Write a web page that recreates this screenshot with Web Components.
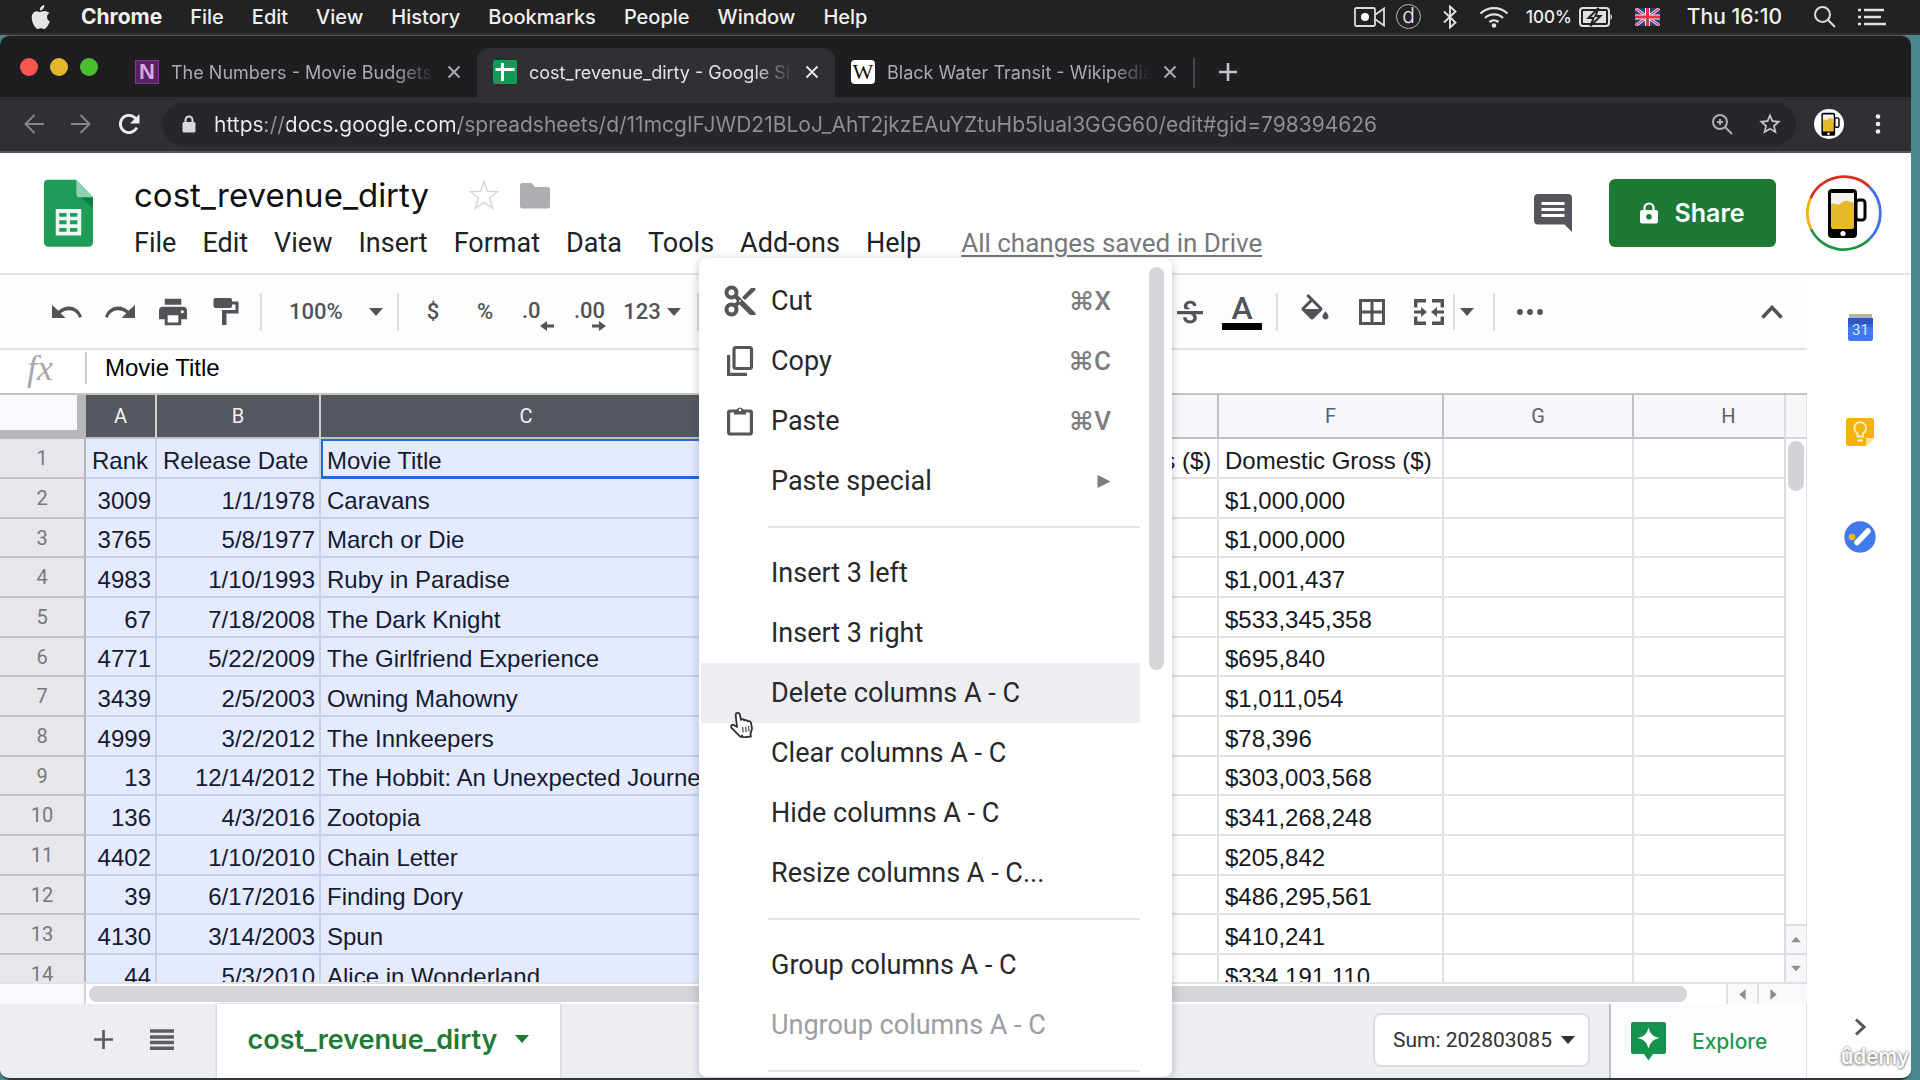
<!DOCTYPE html>
<html lang="en">
<head>
<meta charset="utf-8">
<title>cost_revenue_dirty - Google Sheets</title>
<style>
html,body{margin:0;height:100%}
body{background:#4a868d;font-family:Roboto,"Liberation Sans",sans-serif;overflow:hidden}
</style>
</head>
<body>
<desktop-shell></desktop-shell>
<script>
const ICONS = {
  apple:['0 0 20 28','<path fill="#e4e4e4" d="M13.6 1c.2 1.700-.5 3.300-1.500 4.500-1 1.200-2.300 1.700-3.300 1.500-.2-1.600.5-3.200 1.500-4.300C11.200 1.600 12.500 1 13.600 1zM19 9.700c-1.700 1-2.500 2.500-2.500 4.400 0 2.200 1.200 4 3 4.800-.6 2-1.700 4-3 5.600-.9 1.200-1.800 2.300-3.200 2.300-1.300 0-1.700-.8-3.300-.8s-2.100.8-3.400.8-2.300-1.100-3.200-2.400C1.200 21.600 0 17.700 0 14.600 0 10.200 2.700 7.700 5.400 7.700c1.400 0 2.800 1 3.700 1 .9 0 2.500-1.100 4.300-1.100 2.100 0 4.200.9 5.600 2.100z"/>'],
  camera:['0 0 31 20','<g fill="none" stroke="#ddd" stroke-width="1.800"><rect x="1" y="1" width="20" height="18" rx="1.500"/><path d="M21.500 7.500 30 1.500v17l-8.500-6"/></g><circle cx="11" cy="10" r="4" fill="#fff"/>'],
  bluetooth:['0 0 14 24','<path fill="none" stroke="#e0e0e0" stroke-width="1.900" d="m1 6.500 11.500 11L7 22.500v-21l5.500 5L1 17.500"/>'],
  wifi:['0 0 30 22','<g fill="none" stroke="#e0e0e0" stroke-width="2.300"><path d="M1.500 7.500a19.500 19.500 0 0 1 27 0M6 12a13 13 0 0 1 18 0M10.500 16a7 7 0 0 1 9 0"/></g><circle cx="15" cy="19.500" r="2.300" fill="#e0e0e0"/>'],
  battery:['0 0 34 20','<rect x="1" y="1" width="29" height="18" rx="3" fill="none" stroke="#e0e0e0" stroke-width="2"/><path fill="#e0e0e0" d="M31.500 7c2 1 2 5 0 6z"/><rect x="4" y="4" width="23" height="12" fill="#e0e0e0"/><path fill="#e0e0e0" stroke="#222" stroke-width="2" d="M19.500 1 9.500 11h5l-3 8 10-10h-5z"/>'],
  flag:['0 0 25 18','<path fill="#303c80" d="M0 0h25v18H0z"/><path stroke="#eee" stroke-width="3" d="m0 0 25 18M25 0 0 18"/><path stroke="#d8344a" stroke-width="1.200" d="m0 0 25 18M25 0 0 18"/><path stroke="#eee" stroke-width="5" d="M12.500 0v18M0 9h25"/><path stroke="#d8344a" stroke-width="3" d="M12.500 0v18M0 9h25"/>'],
  spot:['0 0 22 22','<g fill="none" stroke="#ddd" stroke-width="2"><circle cx="8.500" cy="8.500" r="7.500"/><path d="m14 14 7 7"/></g>'],
  list:['0 0 28 18','<g stroke="#e0e0e0" stroke-width="2.400"><path d="M6 2h20M6 9h17M6 16h22"/><path d="M0 2h3M0 9h3M0 16h3"/></g>'],
  close:['0 0 14 14','<path stroke="currentColor" stroke-width="2" d="m1.500 1.500 11 11m0-11-11 11"/>'],
  add:['0 0 18 18','<path stroke="currentColor" stroke-width="2.600" d="M9 0v18M0 9h18"/>'],
  sheetfav:['0 0 24 24','<rect width="24" height="24" rx="2" fill="#149a55"/><path stroke="#fff" stroke-width="3" d="M9.500 3v18M2.500 9.500h19"/>'],
  back:['0 0 20 20','<path fill="none" stroke="currentColor" stroke-width="2" d="M20 10H2M10.500 1 1.500 10l9 9"/>'],
  fwd:['0 0 20 20','<path fill="none" stroke="currentColor" stroke-width="2" d="M0 10h18M9.500 1l9 9-9 9"/>'],
  reload:['0 0 22 22','<path fill="none" stroke="#eee" stroke-width="2.800" d="M18.800 14.500A8.600 8.600 0 1 1 16.500 4.400L19 7"/><path fill="#eee" d="M21.500 1v9.500H12z"/>'],
  lock:['0 0 14 18','<path fill="none" stroke="currentColor" stroke-width="2" d="M3.500 8V5a3.500 3.500 0 0 1 7 0v3"/><rect x="0.500" y="7" width="13" height="10.500" rx="1.500" fill="currentColor"/>'],
  zoom:['0 0 22 22','<g fill="none" stroke="#aaadb2" stroke-width="2"><circle cx="9" cy="9" r="7"/><path d="m14 14 7 7M9 6v6M6 9h6"/></g>'],
  star:['0 0 24 24','<path fill="currentColor" d="m22 9.240-7.190-.62L12 2 9.190 8.630 2 9.240l5.460 4.730L5.820 21 12 17.270 18.180 21l-1.630-7.030zM12 15.400l-3.760 2.270 1-4.280-3.320-2.880 4.380-.38L12 6.100l1.710 4.040 4.380.38-3.320 2.880 1 4.280z"/>'],
  kebab:['0 0 6 20','<circle cx="3" cy="2.500" r="2.300" fill="#eee"/><circle cx="3" cy="10" r="2.300" fill="#eee"/><circle cx="3" cy="17.500" r="2.300" fill="#eee"/>'],
  beer:['0 0 76 76','<rect x="50" y="25" width="9" height="20" rx="3" fill="#fff" stroke="#000" stroke-width="3"/><rect x="22" y="14" width="29" height="49" rx="4" fill="#000"/><path fill="#f4f0ec" d="M25 18h23v18H25z"/><path fill="#e6b92c" d="M25 29c4-2 5 2 9 0 4-4 8-4 10-2 2 0 3 0 4 1v24q0 2-2 2H27q-2 0-2-2z"/><circle cx="37" cy="58.500" r="2.600" fill="#fff"/>'],
  ring:['0 0 76 76','<g fill="none" stroke-width="2.800"><path stroke="#d93025" d="M4.500 23.500A36.500 36.500 0 0 1 63.500 12"/><path stroke="#4170ee" d="M63.500 12a36.500 36.500 0 0 1 0 52"/><path stroke="#23934a" d="M63.500 64A36.500 36.500 0 0 1 5 54"/><path stroke="#f6ae1a" d="M5 54a36.500 36.500 0 0 1-.5-30.500"/></g>'],
  sheetlogo:['0 0 50 69','<path fill="#1f9d58" d="M4 0h29l17 18v46a4.500 4.500 0 0 1-4.500 4.500h-41A4.500 4.500 0 0 1 0 64V4a4 4 0 0 1 4-4z"/><path fill="#0f8045" d="m36 17 14 12V18z"/><path fill="#8ed1b1" d="M33 0v14a4 4 0 0 0 4 4h13z"/><path fill="#f1f8f4" d="M12 30h26v27H12z"/><path fill="#1f9d58" d="M15.500 34H23v3.800h-7.500zm11 0H34v3.800h-7.500zm-11 7.500H23v4h-7.500zm11 0H34v4h-7.500zm-11 7.700H23V53h-7.500zm11 0H34V53h-7.500z"/>'],
  folder:['0 0 30 27','<path fill="#aeaeb2" d="M2.500 1h9l3.500 4h12.500A2.500 2.500 0 0 1 30 7.500V24a2.500 2.500 0 0 1-2.500 2.500h-25A2.500 2.500 0 0 1 0 24V3.500A2.500 2.500 0 0 1 2.500 1z"/>'],
  outstar:['0 0 30 30','<path fill="none" stroke="#d6d6d8" stroke-width="1.500" d="m15 1.500 3.500 9.800 10.300.3-8.200 6.400 3 10.300-8.600-6-8.600 6 3-10.300L1.200 11.600l10.300-.3z"/>'],
  comment:['0 0 38 38','<path fill="#54565c" d="M4 0h30a4 4 0 0 1 4 4v34l-7.500-7.500H4a4 4 0 0 1-4-4V4a4 4 0 0 1 4-4z"/><path stroke="#fff" stroke-width="3.200" d="M7.500 9.500h23M7.500 15.500h23M7.500 21.500h23"/>'],
  sharelock:['0 0 18 22','<path fill="none" stroke="#fff" stroke-width="2.200" d="M4.500 9V6a4.500 4.500 0 0 1 9 0v3"/><rect y="8" width="18" height="13.500" rx="2" fill="#fff"/><circle cx="9" cy="14.700" r="2.800" fill="#1d7a34"/>'],
  undo:['0 0 30 16','<path fill="currentColor" d="M0 1v13h13.500L8.700 9.300C11 7.400 14 6.200 17 6.200c5 0 9 3.300 10 7.600l3-1C28.300 7.200 23.200 2.500 17 2.500c-4 0-7.800 1.600-10.600 4.300z"/>'],
  redo:['0 0 30 16','<path fill="currentColor" d="M30 1v13H16.500l4.800-4.700C19 7.400 16 6.200 13 6.200c-5 0-9 3.300-10 7.600l-3-1C1.700 7.200 6.800 2.500 13 2.500c4 0 7.800 1.600 10.600 4.300z"/>'],
  print:['0 0 24 24','<path fill="currentColor" d="M19.500 8h-15A3 3 0 0 0 1.500 11v6.500h4.300V22h12.400v-4.500h4.300V11a3 3 0 0 0-3-3zM16 19.800H8v-5.300h8zM19 13a1.200 1.200 0 1 1 0-2.400 1.200 1.200 0 0 1 0 2.400zM18.200 2H5.800v4.500h12.400z"/>'],
  paint:['0 0 26 27','<path fill="currentColor" d="M2.500 0H17a2 2 0 0 1 2 2v1.500h6.500v12h-12V27H9V12h13.500V6.500H19V8a2 2 0 0 1-2 2H2.500A2 2 0 0 1 .5 8V2a2 2 0 0 1 2-2z"/>'],
  caret:['0 0 14 8','<path fill="currentColor" d="M0 0h14L7 8z"/>'],
  left:['0 0 14 10','<path fill="currentColor" d="M14 3.500H7V0L0 5l7 5V6.500h7z"/>'],
  right:['0 0 14 10','<path fill="currentColor" d="M0 3.500h7V0l7 5-7 5V6.500H0z"/>'],
  strike:['0 0 24 24','<path fill="currentColor" d="M7.200 9.500c-.7-1-.9-1.900-.9-2.800C6.300 4 8.600 1.500 12.200 1.500c3.500 0 5.700 2 5.800 5h-3.200c0-1.400-1-2.400-2.700-2.400-1.500 0-2.600.9-2.600 2.200 0 1.200.8 1.900 3.200 3.200zM0 11h24v3h-7c.9 1 1.300 2 1.300 3 0 3.300-2.700 5.500-6.200 5.500-3.600 0-6.400-2-6.500-5.600h3.200c.1 1.900 1.400 3 3.400 3 1.700 0 2.900-1 2.900-2.500 0-1.200-.7-2.200-2.600-3.400H0z"/>'],
  fill:['0 0 24 24','<path fill="currentColor" d="M16.560 8.940 7.620 0 6.210 1.410l2.380 2.380-5.150 5.150a1.490 1.490 0 0 0 0 2.120l5.500 5.500c.29.290.68.440 1.060.44s.770-.15 1.060-.44l5.500-5.500c.590-.58.590-1.530 0-2.120zM5.210 10 10 5.210 14.790 10zM19 11.500s-2 2.170-2 3.500c0 1.100.9 2 2 2s2-.9 2-2c0-1.330-2-3.500-2-3.500z"/>'],
  borders:['0 0 26 26','<path fill="none" stroke="currentColor" stroke-width="3" d="M1.500 1.500h23v23h-23zM13 1.500v23M1.500 13h23"/>'],
  merge:['0 0 30 26','<path fill="none" stroke="currentColor" stroke-width="3.400" d="M1.700 8.500V1.700H12M18 1.700h10.300v6.800M28.300 17.500v6.800H18M12 24.300H1.700v-6.800"/><path fill="currentColor" d="M0 11.500h7V8l6 5-6 5v-3.500H0zM30 11.500h-7V8l-6 5 6 5v-3.500h7z"/>'],
  dots:['0 0 26 6','<circle cx="3" cy="3" r="2.900" fill="currentColor"/><circle cx="13" cy="3" r="2.900" fill="currentColor"/><circle cx="23" cy="3" r="2.900" fill="currentColor"/>'],
  up:['0 0 22 14','<path fill="none" stroke="currentColor" stroke-width="3.600" d="m1.500 12.500 9.500-10 9.500 10"/>'],
  next:['0 0 12 18','<path fill="none" stroke="currentColor" stroke-width="3" d="m2 1.500 8 7.500-8 7.500"/>'],
  bold:['0 0 24 24','<path fill="none" stroke="currentColor" stroke-width="3" d="M8 5h5a3.500 3.500 0 0 1 0 7H8zm0 7h6a3.500 3.500 0 0 1 0 7H8z"/>'],
  italic:['0 0 24 24','<path fill="none" stroke="currentColor" stroke-width="3" d="M10 5h8M6 19h8M14 5l-4 14"/>'],
  cut:['0 0 32 32','<g fill="none" stroke="currentColor" stroke-width="4"><circle cx="7.500" cy="7.500" r="5"/><circle cx="7.500" cy="24.500" r="5"/></g><path fill="currentColor" d="M10 12.500 13 9.500 31.500 28v2H26L15.500 19.500 11.500 23l-3-2.500 4.500-4.500zM18 12.500 27 3h4.500v2L21 15z"/><circle cx="16" cy="16" r=".9" fill="#fff"/>'],
  copy:['0 0 26 30','<rect x="7" y="1.500" width="17.500" height="21" rx="2" fill="none" stroke="currentColor" stroke-width="3.200"/><path fill="none" stroke="currentColor" stroke-width="3.200" d="M1.600 9v19.400H20"/>'],
  paste:['0 0 26 30','<rect x="1.600" y="5" width="22.800" height="23" rx="1.500" fill="none" stroke="currentColor" stroke-width="3.200"/><path fill="currentColor" d="M7 4h2.500a3.700 3.700 0 0 1 7 0H19v4.500H7z"/><circle cx="13" cy="4" r="1.300" fill="#fff"/>'],
  sub:['0 0 13 13','<path fill="currentColor" d="M0 0v13l13-6.500z"/>'],
  calendar:['0 0 27 27','<path fill="#b5b1ab" d="M2 0h23v7H2z"/><path fill="#3057bf" d="M1 4h25v7H1z"/><path fill="#4179ee" d="M1 10h25v14.500q0 2.500-2.500 2.500h-20Q1 27 1 24.500z"/><path fill="#3565d6" d="M1 10h25v3H1z"/><text x="13.500" y="21" font-family="Roboto" font-size="15" fill="#dce6ff" text-anchor="middle">31</text>'],
  keep:['0 0 28 28','<path fill="#f5b20f" d="M2.500 0h23A2.500 2.500 0 0 1 28 2.500V20l-8 8H2.500A2.500 2.500 0 0 1 0 25.500v-23A2.500 2.500 0 0 1 2.500 0z"/><path fill="#fce3a2" d="M20 28v-8h8z"/><path fill="none" stroke="#fdf0cc" stroke-width="1.800" d="M11.500 18.500v-3a6 6 0 1 1 5.500 0v3zM11.500 22.500H17"/>'],
  tasks:['0 0 32 32','<circle cx="16" cy="16" r="15.700" fill="#4179ee"/><circle cx="8" cy="16" r="3.300" fill="#f4b41c"/><path stroke="#fff" stroke-width="5.500" stroke-linecap="round" d="m13 21.500 11-11.500"/>'],
  lines:['0 0 24 21','<path stroke="currentColor" stroke-width="3.400" d="M0 2h24M0 8h24M0 13.500h24M0 19.200h24"/>'],
  explore:['0 0 35 39','<path fill="#14924e" d="M2 0h31a2 2 0 0 1 2 2v28a2 2 0 0 1-2 2H22l-4.500 6.500L13 32H2a2 2 0 0 1-2-2V2a2 2 0 0 1 2-2z"/><path fill="#fff" d="M17.500 5.500q1.700 9 11 10.500-9.300 1.500-11 10.500-1.700-9-11-10.500 9.300-1.500 11-10.500z"/>'],
  hand:['0 0 24 26','<path fill="#fff" stroke="#333" stroke-width="1.800" stroke-linejoin="round" d="M7.500 1C9 .8 9.800 1.800 10 3l1 5c.5-1.200 3-1 3.300.5.800-1 2.900-.5 3.200.8 1.200-.5 3-.3 3.500 1.700l1 5.500-1.500 5.500.5 2.500-8 1-1-2-1 1.500c-3.500-2-5.500-6-9.500-9-1-1.300 0-3.500 2-3.200L7 15 5.700 3.500C5.500 2 6 1.200 7.500 1z"/><path stroke="#555" stroke-width="1.300" d="m12.500 15 .7 5.500m2.300-6 .6 5.500m2.400-6 .5 5.500"/>']
};
const RESET = `:host{display:block;box-sizing:border-box}*{box-sizing:border-box}
button,input,select{font:inherit;color:inherit;background:none;border:0;padding:0;margin:0;outline:0;appearance:none}
button{display:flex;align-items:center;justify-content:center;white-space:nowrap}`;
function define(name, css, html, setup){
  const tpl = document.createElement('template');
  tpl.innerHTML = `<style>${RESET}${css}</style>${html}`;
  customElements.define(name, class extends HTMLElement{
    constructor(){ super(); this.attachShadow({mode:'open'}); }
    connectedCallback(){
      if(this.shadowRoot.firstChild) return;
      this.shadowRoot.append(tpl.content.cloneNode(true));
      if(setup) setup(this, this.shadowRoot);
    }
  });
}
define('ui-icon', ':host{flex:none}svg{display:block;width:100%;height:100%}', '', (el, root) => {
  const [box, body] = ICONS[el.getAttribute('name')];
  el.style.width = el.getAttribute('w') + 'px';
  el.style.height = el.getAttribute('h') + 'px';
  root.innerHTML += `<svg viewBox="${box}" aria-hidden="true">${body}</svg>`;
});

define('mac-menubar', `
:host{background:#222;color:#f0f0f0;height:35px;font:500 20px Inter,sans-serif;padding:0 34px 0 31px;display:flex;align-items:center;justify-content:space-between;border-bottom:2px solid #303032}
nav,.status{display:flex;align-items:center}
nav{gap:28px}b{font-weight:700;font-size:21px;padding-left:2px}
.status{gap:22px}.pair{display:flex;align-items:center;gap:7px;font-size:17px;margin-left:-5px}
.time{font-size:21px;margin:0 10px 0 5px}
.d{width:25px;height:25px;border:1px solid #bbb;border-radius:50%;text-align:center;line-height:22px;font-weight:300;font-size:21px;margin:0 0 0 -11px}
`, `<nav><ui-icon name="apple" w="20" h="26"></ui-icon><button><b>Chrome</b></button><button>File</button><button>Edit</button><button>View</button><button>History</button><button>Bookmarks</button><button>People</button><button>Window</button><button>Help</button></nav>
<div class="status"><ui-icon name="camera" w="31" h="20"></ui-icon><span class="d">d</span><ui-icon name="bluetooth" w="14" h="24"></ui-icon><ui-icon name="wifi" w="30" h="22"></ui-icon><span class="pair">100%<ui-icon name="battery" w="34" h="20"></ui-icon></span><ui-icon name="flag" w="25" h="18"></ui-icon><span class="time">Thu 16:10</span><ui-icon name="spot" w="22" h="22"></ui-icon><ui-icon name="list" w="28" h="18"></ui-icon></div>`);

define('browser-tab', `
:host{display:flex;align-items:center;height:50px;width:358px;padding:0 16px 2px 16px;border-radius:12px 12px 0 0;color:#a9abb0;gap:12px;flex:none}
:host([active]){background:#2f3034;color:#e3e4e7}
.t{flex:1;overflow:hidden;white-space:nowrap;-webkit-mask-image:linear-gradient(90deg,#000 85%,transparent)}
`, `<slot name="icon"></slot><span class="t"><slot></slot></span><button aria-label="Close tab"><ui-icon name="close" w="14" h="14"></ui-icon></button>`);

define('tab-strip', `
:host{display:flex;height:62px;background:#1e1e21;padding:12px 0 0 20px;font:18px Inter,sans-serif;color:#c5c6ca;border-radius:10px 10px 0 0;border-top:1px solid #58585b}
.lights{display:flex;gap:12px;padding-top:10px;width:99px;flex:none}
.lights i{width:18px;height:18px;border-radius:50%}
.fav{width:24px;height:24px;text-align:center;line-height:24px;font-size:22px;flex:none}
.n{background:#5b1f63;color:#dba6df;font-family:"Liberation Sans";font-weight:700;border:1px solid #80398a;line-height:22px}
.w{background:#fff;color:#111;font-family:"Liberation Serif";border-radius:4px}
hr{width:2px;height:30px;background:#45464a;border:0;margin:10px 24px 0 0}
button{height:48px}`, `
<div class="lights"><i style="background:#fc5650"></i><i style="background:#e5b62c"></i><i style="background:#4cbc31"></i></div>
<browser-tab><span slot="icon" class="fav n">N</span>The Numbers - Movie Budgets, Financials</browser-tab>
<browser-tab active><ui-icon slot="icon" name="sheetfav" w="24" h="24"></ui-icon>cost_revenue_dirty - Google Sheets</browser-tab>
<browser-tab><span slot="icon" class="fav w">W</span>Black Water Transit - Wikipedia</browser-tab><hr>
<button aria-label="New tab"><ui-icon name="add" w="18" h="18"></ui-icon></button>`);

define('address-bar', `
:host{display:flex;align-items:center;height:56px;background:#2f3034;color:#85868a;padding:0 30px 0 24px;border-bottom:2px solid #55565a}
.nav{display:flex;gap:27px;width:138px;flex:none}
.box{flex:1;display:flex;align-items:center;height:43px;border-radius:22px;background:#26272b;padding:0 13px 0 20px;color:#d8d9db;gap:18px}
input{flex:1;min-width:0;font:21px Inter,sans-serif;height:40px;color:#909196;-webkit-text-fill-color:transparent;background:linear-gradient(90deg,#eceded 0 52px,#909196 52px 73px,#eceded 73px 245px,#909196 245px);-webkit-background-clip:text;background-clip:text}
.me{width:30px;height:30px;border-radius:50%;background:#fff;margin:0 31px 0 18px;display:flex;justify-content:center}
.r{display:flex;gap:24px;color:#c4c6ca;align-items:center}
`, `<div class="nav"><button aria-label="Back"><ui-icon name="back" w="20" h="20"></ui-icon></button><button aria-label="Forward"><ui-icon name="fwd" w="20" h="20"></ui-icon></button><button aria-label="Reload"><ui-icon name="reload" w="22" h="22"></ui-icon></button></div>
<div class="box"><ui-icon name="lock" w="14" h="18"></ui-icon><input aria-label="Address" value="https://docs.google.com/spreadsheets/d/11mcgIFJWD21BLoJ_AhT2jkzEAuYZtuHb5lual3GGG60/edit#gid=798394626"><div class="r"><ui-icon name="zoom" w="22" h="22"></ui-icon><ui-icon name="star" w="26" h="26"></ui-icon></div></div>
<button class="me" aria-label="Profile"><ui-icon name="beer" w="36" h="36"></ui-icon></button><button aria-label="More"><ui-icon name="kebab" w="6" h="20"></ui-icon></button>`);

define('sheet-header', `
:host{display:flex;height:122px;background:#fff;border-bottom:2px solid #e3e3e6;padding:0 29px 0 44px;color:#202124}
.logo{padding-top:26px;width:90px}
.mid{flex:1;padding-top:18px}
.title{display:flex;align-items:center;height:48px}
h1{font:400 33px Inter,sans-serif;margin:0 40px 0 0;line-height:48px;color:#101012}
.title ui-icon+ui-icon{margin-left:21px}
nav{display:flex;gap:26px;font-size:27px;line-height:40px;align-items:center}
nav button{height:48px}
a{color:#77787b;font-size:26px;margin-left:14px;text-underline-offset:3px;text-decoration-thickness:2px}
.right{display:flex;align-items:center;align-self:flex-start;height:120px}
.share{background:#1d7a34;color:#fff;width:167px;height:68px;border-radius:6px;font:600 25px Inter,sans-serif;gap:16px;margin:0 30px 0 37px}
.av{position:relative;width:76px;height:76px}
.av ui-icon+ui-icon{position:absolute;inset:0}
`, `<div class="logo"><ui-icon name="sheetlogo" w="49" h="69"></ui-icon></div>
<div class="mid"><div class="title"><h1>cost_revenue_dirty</h1><ui-icon name="outstar" w="30" h="30"></ui-icon><ui-icon name="folder" w="30" h="27"></ui-icon></div>
<nav><button>File</button><button>Edit</button><button>View</button><button>Insert</button><button>Format</button><button>Data</button><button>Tools</button><button>Add-ons</button><button>Help</button><a href="#">All changes saved in Drive</a></nav></div>
<div class="right"><button aria-label="Comments"><ui-icon name="comment" w="38" h="38"></ui-icon></button><button class="share"><ui-icon name="sharelock" w="18" h="22"></ui-icon>Share</button><button class="av" aria-label="Account"><ui-icon name="ring" w="76" h="76"></ui-icon><ui-icon name="beer" w="76" h="76"></ui-icon></button></div>`);

define('sheet-toolbar', `
:host{display:flex;align-items:center;height:75px;background:#fdfdfe;border-bottom:2px solid #e3e3e8;padding:0 17px 0 40px;color:#515358;font:500 22px Roboto,sans-serif}
button{width:53px;height:52px;flex:none}
.n{width:52px}.wide{width:57px}.pick{gap:6px;width:74px}
hr{width:2px;height:38px;background:#dedee2;border:0;margin:0 8px;flex:none}
.zoom{display:flex;align-items:center;width:119px;padding-left:19px}
select{width:80px}
.dec{flex-direction:column;padding:8px 9px 0 11px}
.dec ui-icon{align-self:flex-end}
.dec span{line-height:20px;align-self:flex-start}
.hid{display:flex;justify-content:center;width:457px;flex:none}
.color{flex-direction:column;font-size:32px;line-height:30px}
.color i{display:block;width:40px;height:7px;background:#000}
.drop{width:36px}.last{margin-left:auto;width:36px}
hr.thin{height:36px;margin:0 -6px 0 -4px}
`, `<button aria-label="Undo"><ui-icon name="undo" w="30" h="16"></ui-icon></button><button aria-label="Redo"><ui-icon name="redo" w="30" h="16"></ui-icon></button><button aria-label="Print"><ui-icon name="print" w="34" h="32"></ui-icon></button><button aria-label="Paint format"><ui-icon name="paint" w="26" h="27"></ui-icon></button><hr>
<div class="zoom"><select aria-label="Zoom"><option>100%</option></select><ui-icon name="caret" w="14" h="8"></ui-icon></div><hr>
<button class="n">$</button><button class="n">%</button><button class="n dec"><span>.0</span><ui-icon name="left" w="14" h="10"></ui-icon></button><button class="n dec"><span>.00</span><ui-icon name="right" w="14" h="10"></ui-icon></button><button class="pick">123<ui-icon name="caret" w="14" h="8"></ui-icon></button><hr>
<div class="hid"><button aria-label="Bold"><ui-icon name="bold" w="30" h="30"></ui-icon></button><button aria-label="Italic"><ui-icon name="italic" w="30" h="30"></ui-icon></button></div>
<button class="n" aria-label="Strikethrough"><ui-icon name="strike" w="26" h="26"></ui-icon></button><button class="n color">A<i></i></button><hr>
<button class="wide" aria-label="Fill colour"><ui-icon name="fill" w="36" h="36"></ui-icon></button><button class="wide" aria-label="Borders"><ui-icon name="borders" w="26" h="26"></ui-icon></button><button class="wide" aria-label="Merge"><ui-icon name="merge" w="30" h="26"></ui-icon></button><hr class="thin"><button class="drop" aria-label="Merge type"><ui-icon name="caret" w="14" h="8"></ui-icon></button><hr>
<button aria-label="More"><ui-icon name="dots" w="26" h="6"></ui-icon></button><button class="last" aria-label="Hide menus"><ui-icon name="up" w="22" h="14"></ui-icon></button>`);

define('formula-bar', `
:host{display:flex;align-items:center;height:45px;background:#fff;border-bottom:2px solid #c3c3c7;padding-bottom:7px}
label{width:85px;padding-left:27px;font:italic 36px/36px "Liberation Serif",serif;color:#a8a8aa}
input{flex:1;border-left:2px solid #ccc;padding-left:18px;height:32px;font:24px "Liberation Sans",sans-serif;color:#000}
`, `<label for="f">fx</label><input id="f" value="Movie Title">`);

const ROWS = [['Rank','Release Date','Movie Title','Domestic Gross ($)'],['3009','1/1/1978','Caravans','$1,000,000'],['3765','5/8/1977','March or Die','$1,000,000'],['4983','1/10/1993','Ruby in Paradise','$1,001,437'],['67','7/18/2008','The Dark Knight','$533,345,358'],['4771','5/22/2009','The Girlfriend Experience','$695,840'],['3439','2/5/2003','Owning Mahowny','$1,011,054'],['4999','3/2/2012','The Innkeepers','$78,396'],['13','12/14/2012','The Hobbit: An Unexpected Journey','$303,003,568'],['136','4/3/2016','Zootopia','$341,268,248'],['4402','1/10/2010','Chain Letter','$205,842'],['39','6/17/2016','Finding Dory','$486,295,561'],['4130','3/14/2003','Spun','$410,241'],['44','5/3/2010','Alice in Wonderland','$334,191,110']];
define('sheet-grid', `
:host{display:grid;grid-template:minmax(0,1fr) 22px / minmax(0,1fr) 23px;flex:1;min-height:0;background:#fff}
.view{overflow:hidden}
table{border-collapse:separate;border-spacing:0;table-layout:fixed;width:1823px;font:24px/27px "Liberation Sans",sans-serif;color:#16181d}
th,td{padding:0 6px;border-right:2px solid #e2e2e4;border-bottom:2px solid #e2e2e4;white-space:nowrap;overflow:hidden}
td{vertical-align:bottom;padding-bottom:3px}
tbody tr{height:40px}tbody tr:nth-child(3n){height:39px}
thead tr{height:44px}
th{font:20px/24px Roboto,sans-serif;color:#5d5f63}
thead th{background:#f6f7fb;border-color:#c0c0c3}
thead th.s{background:#54575d;color:#f4f4f5;border-right-color:#d0d0d4}
thead th.corner{background:#f8f9fd;border-right:9px solid #b7b7b9;border-bottom:9px solid #b7b7b9}
tbody th{background:#e7e6eb;border-right-color:#b4b4b8;border-bottom-color:#c2c2c6;color:#77787c}
td.s{background:#e4eaff;border-color:#c8d0e4;color:#151a30}
td.r{text-align:right;padding-right:4px}
tr:first-child td.r{text-align:left}
td.cur{box-shadow:inset 2px 2px #1a6ddd,inset 0 -1px #1a6ddd;border-bottom-color:#1a6ddd}
.v{display:flex;flex-direction:column;border-left:2px solid #dcdce0;border-right:1px solid #e0dfe8}
.v .top{height:44px;background:#f8f6f9;border-bottom:2px solid #d8d6e4}
.v .thumb{width:16px;height:50px;border-radius:8px;background:#d2d2d8;margin:2px auto auto}
.v button{height:29px;background:#f8f6f9;border-top:2px solid #deDDe2;color:#8d8d90}
.h{display:flex;border-top:2px solid #e2e2e6;grid-column:1/3}
.h .corner{width:86px;background:#faf8fb;border-right:2px solid #d4d4d8}
.h .thumb{flex:1;height:16px;border-radius:8px;background:#d4d4da;margin:2px 39px 0 3px}
.h button{width:31px;background:#faf8fb;border-left:2px solid #e2e2e6;color:#8d8d90}
.h .last{width:50px;justify-content:flex-start;padding-left:9px}
.up{transform:rotate(180deg)}.lf{transform:rotate(90deg)}.rt{transform:rotate(-90deg)}
`, `<div class="view"><table><colgroup><col style="width:86px"><col style="width:71px"><col style="width:164px"><col style="width:412px"><col style="width:254px"><col style="width:232px"><col style="width:225px"><col style="width:190px"><col style="width:191px"></colgroup><thead><tr><th class="corner"></th><th class="s">A</th><th class="s">B</th><th class="s">C</th><th></th><th></th><th>F</th><th>G</th><th>H</th></tr></thead><tbody></tbody></table></div>
<div class="v"><div class="top"></div><div class="thumb"></div><button aria-label="Scroll up"><ui-icon class="up" name="caret" w="10" h="7"></ui-icon></button><button aria-label="Scroll down"><ui-icon name="caret" w="10" h="7"></ui-icon></button></div>
<div class="h"><div class="corner"></div><div class="thumb"></div><button aria-label="Scroll left"><ui-icon class="lf" name="caret" w="11" h="7"></ui-icon></button><button class="last" aria-label="Scroll right"><ui-icon class="rt" name="caret" w="11" h="7"></ui-icon></button></div>`, (el, root) => {
  root.querySelector('tbody').innerHTML = ROWS.map((r, i) => `<tr><th>${i+1}</th><td class="s r">${r[0]}</td><td class="s r">${r[1]}</td><td class="s${i?'':' cur'}">${r[2]}</td><td></td><td>${i?'':'Worldwide Gross ($)'}</td><td>${r[3]}</td><td></td><td></td></tr>`).join('');
});

define('sheet-footer', `
:host{display:flex;height:74px;background:#edeef3;color:#5c5d61}
.tools{display:flex;align-items:center;gap:37px;width:217px;padding:0 0 4px 94px;flex:none}
.tab{display:flex;background:#fff;color:#1f7a3a;width:343px;font:600 27px Inter,sans-serif;gap:18px;box-shadow:0 0 3px #b8b8bc;padding-bottom:4px}
.grow{flex:1}
.sum{align-self:center;display:flex;align-items:center;background:#fff;border:2px solid #dcdce1;border-radius:8px;height:54px;width:217px;padding-left:18px;margin:0 19px 2px 0;font-size:21px;color:#303134;position:relative}
.sum ui-icon{position:absolute;right:13px;pointer-events:none}
select{width:100%}
.exp{background:#fdfcff;border-left:2px solid #bfbfc6;border-right:1px solid #e0dfe8;width:198px;font:500 21px Inter,sans-serif;color:#1d9a50;gap:26px;justify-content:flex-start;padding-left:20px}
`, `<div class="tools"><button aria-label="Add sheet"><ui-icon name="add" w="19" h="19"></ui-icon></button><button aria-label="All sheets"><ui-icon name="lines" w="24" h="21"></ui-icon></button></div>
<button class="tab">cost_revenue_dirty<ui-icon name="caret" w="14" h="8"></ui-icon></button><div class="grow"></div>
<label class="sum"><select aria-label="Summary"><option>Sum: 202803085</option></select><ui-icon name="caret" w="14" h="8"></ui-icon></label><button class="exp"><ui-icon name="explore" w="35" h="39"></ui-icon>Explore</button>`);

define('side-panel', `
:host{display:flex;flex-direction:column;align-items:center;width:104px;flex:none;background:#fff;padding:36px 0 40px 2px;color:#55565c;gap:73px}
button{height:32px}button:last-child{margin-top:auto;height:22px}
`, `<button aria-label="Calendar"><ui-icon name="calendar" w="27" h="27"></ui-icon></button><button aria-label="Keep"><ui-icon name="keep" w="28" h="28"></ui-icon></button><button aria-label="Tasks"><ui-icon name="tasks" w="32" h="32"></ui-icon></button><button aria-label="Hide side panel"><ui-icon name="next" w="12" h="18"></ui-icon></button>`);

define('menu-item', `
button{width:100%;height:60px;justify-content:flex-start;padding:0 29px 0 23px;font-size:27px;color:#27282b}
:host([hover]) button{background:#edeef2}
:host([disabled]) button{color:#9c9ea5}
.i{width:47px;display:flex;flex:none;color:#55565a}
.k{margin-left:auto;color:#7c7d81;display:flex}
`, `<button role="menuitem"><span class="i"><slot name="icon"></slot></span><slot></slot><span class="k"><slot name="key"></slot></span></button>`, (el, root) => { root.querySelector('button').disabled = el.hasAttribute('disabled'); });

define('context-menu', `
:host{display:flex;background:#fff;border-radius:8px;box-shadow:0 2px 10px rgba(40,40,60,.28);overflow:hidden;padding-left:2px}
.items{width:439px;padding-top:13px}
hr{border:0;height:2px;background:#e3e3e8;margin:15px 0 15px 67px}
.bar{width:15px;height:403px;border-radius:8px;background:#d5d5da;margin:9px 0 0 9px}
.key{font:500 26px/32px Roboto,Inter,sans-serif}
`, `<div class="items" role="menu">
<menu-item><ui-icon slot="icon" name="cut" w="32" h="32"></ui-icon>Cut<span slot="key" class="key">⌘X</span></menu-item>
<menu-item><ui-icon slot="icon" name="copy" w="32" h="30"></ui-icon>Copy<span slot="key" class="key">⌘C</span></menu-item>
<menu-item><ui-icon slot="icon" name="paste" w="32" h="30"></ui-icon>Paste<span slot="key" class="key">⌘V</span></menu-item>
<menu-item>Paste special<ui-icon slot="key" name="sub" w="14" h="13"></ui-icon></menu-item><hr>
<menu-item>Insert 3 left</menu-item><menu-item>Insert 3 right</menu-item><menu-item hover>Delete columns A - C</menu-item><menu-item>Clear columns A - C</menu-item><menu-item>Hide columns A - C</menu-item><menu-item>Resize columns A - C...</menu-item><hr>
<menu-item>Group columns A - C</menu-item><menu-item disabled>Ungroup columns A - C</menu-item><hr></div><div class="bar"></div>`);

define('desktop-shell', `
:host{display:flex;flex-direction:column;height:100vh;position:relative}
.win{flex:1;min-height:0;display:flex;flex-direction:column;margin-right:9px;border-bottom:2px solid #303438;border-radius:0 0 10px 10px;overflow:hidden}
.main{flex:1;min-height:0;display:flex}
.doc{flex:1;min-width:0;display:flex;flex-direction:column}
context-menu{position:absolute;left:699px;top:258px;bottom:3px;width:473px}
.cursor{position:absolute;left:730px;top:712px}
.mark{position:absolute;right:11px;bottom:9px;color:#fff;font:500 21px/28px Inter,sans-serif;text-shadow:0 0 3px #777,0 1px 3px #888}
`, `<mac-menubar></mac-menubar><div class="win"><tab-strip></tab-strip><address-bar></address-bar><sheet-header></sheet-header>
<div class="main"><div class="doc"><sheet-toolbar></sheet-toolbar><formula-bar></formula-bar><sheet-grid></sheet-grid><sheet-footer></sheet-footer></div><side-panel></side-panel></div></div>
<context-menu></context-menu><ui-icon class="cursor" name="hand" w="24" h="26"></ui-icon><span class="mark">ûdemy</span>`);
</script>
</body>
</html>
